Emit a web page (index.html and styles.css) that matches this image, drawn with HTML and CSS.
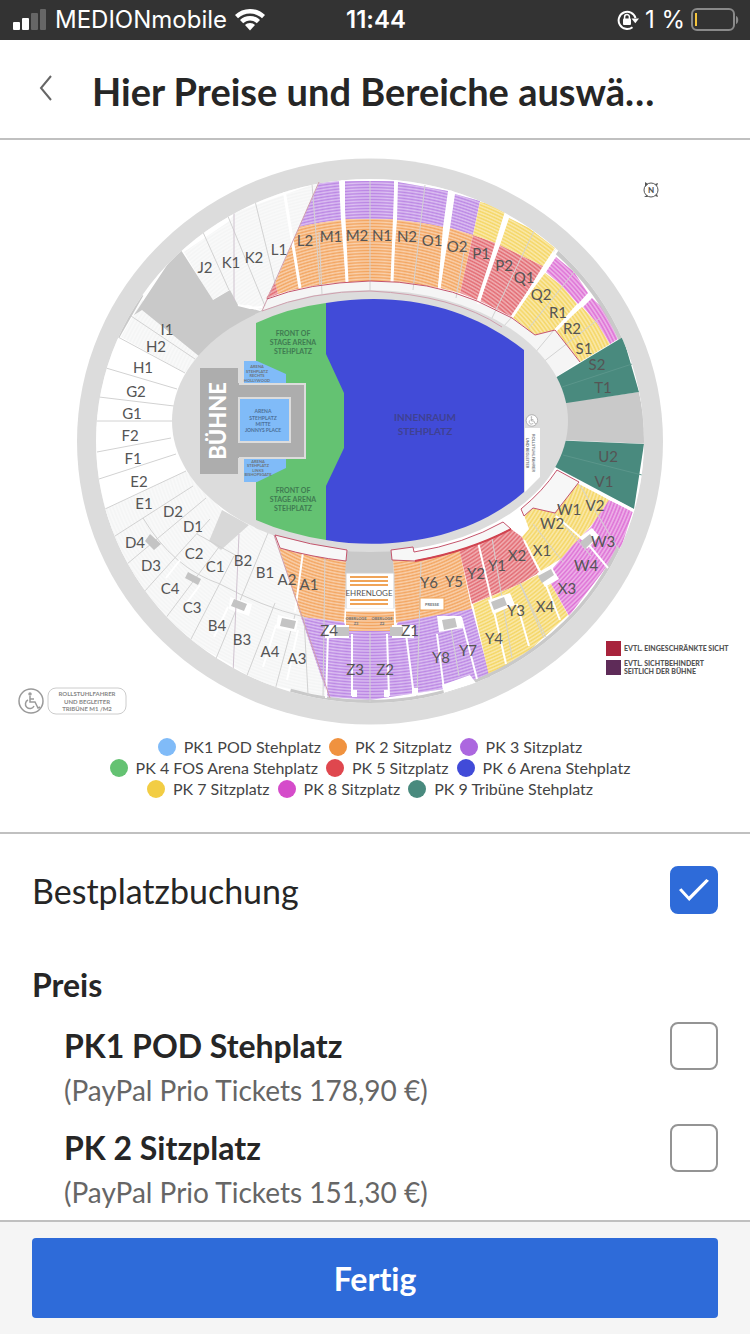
FILE: index.html
```html
<!DOCTYPE html>
<html lang="de">
<head>
    <meta charset="UTF-8">
    <meta name="viewport" content="width=device-width, initial-scale=1.0">
    <title>Preise und Bereiche</title>
    <link rel="stylesheet" href="styles.css">
</head>
<body>

    <!-- Statusleiste -->
    <div class="status-bar">
        <div class="status-left">
            <svg width="34" height="22" viewBox="0 0 34 22" aria-hidden="true">
                <rect x="0" y="13" width="7" height="8" rx="1" fill="#fff"/>
                <rect x="9" y="9" width="7" height="12" rx="1" fill="#fff"/>
                <rect x="18" y="4" width="7" height="17" rx="1" fill="#666"/>
                <rect x="27" y="0" width="6" height="21" rx="1" fill="#666"/>
            </svg>
            <span>MEDIONmobile</span>
            <svg width="30" height="22" viewBox="0 0 30 22" aria-hidden="true">
                <path d="M15 0C9 0 4 2.200 0 6l3 3.300c3.300-3 7.400-4.800 12-4.800s8.700 1.800 12 4.800L30 6C26 2.200 21 0 15 0z" fill="#fff"/>
                <path d="M15 7c-4 0-7.400 1.500-10 4l3.200 3.300c1.800-1.700 4.200-2.800 6.800-2.800s5 1.100 6.800 2.800L25 11c-2.600-2.500-6-4-10-4z" fill="#fff"/>
                <path d="M15 14c-2 0-3.800.8-5 2l5 5.500 5-5.500c-1.200-1.200-3-2-5-2z" fill="#fff"/>
            </svg>
        </div>
        <span class="status-time">11:44</span>
        <div class="status-right">
            <svg width="22" height="22" viewBox="0 0 22 22" aria-hidden="true">
                <path d="M15.500 18.200A8.600 8.600 0 1 1 18.500 9" fill="none" stroke="#fff" stroke-width="2"/>
                <path d="M14.500 9.500h7.500l-3.700 4.800z" fill="#fff"/>
                <rect x="6" y="9.500" width="8" height="6.500" rx="1" fill="#fff"/>
                <path d="M7.600 10V8a2.400 2.400 0 0 1 4.800 0v2" fill="none" stroke="#fff" stroke-width="1.500"/>
            </svg>
            <span>1 %</span>
            <svg width="48" height="24" viewBox="0 0 48 24" aria-hidden="true">
                <rect x="1" y="1" width="42" height="21" rx="5" fill="none" stroke="#8a8a8a" stroke-width="2"/>
                <rect x="4" y="5" width="2" height="13" fill="#f5c53c"/>
                <path d="M45 8c3 1 3 7 0 8z" fill="#8a8a8a"/>
            </svg>
        </div>
    </div>

    <!-- Kopfzeile -->
    <header class="page-header">
        <button class="back-button" type="button" aria-label="Zurück">
            <svg width="14" height="26" viewBox="0 0 14 26" aria-hidden="true">
                <path d="M12 1L2 13l10 12" fill="none" stroke="#666" stroke-width="2"/>
            </svg>
        </button>
        <h1>Hier Preise und Bereiche auswä…</h1>
    </header>

    <main>
        <!-- Saalplan -->
        <section class="plan">
            <svg class="plan-map" viewBox="0 140 750 588" role="img" aria-label="Saalplan">
                <defs>
                    <clipPath id="bowl"><ellipse cx="370" cy="441" rx="274" ry="262"/></clipPath>
                    <radialGradient id="rows" gradientUnits="userSpaceOnUse" cx="0" cy="0" r="3" spreadMethod="repeat" gradientTransform="translate(370 432) scale(1.120 1)">
                        <stop offset="0" stop-color="#fff" stop-opacity=".62"/>
                        <stop offset=".5" stop-color="#fff" stop-opacity=".26"/>
                        <stop offset="1" stop-color="#fff" stop-opacity=".62"/>
                    </radialGradient>
                </defs>

                <ellipse cx="370" cy="441.500" rx="293" ry="283" fill="#dcdcdc"/>
                <g clip-path="url(#bowl)">
                    <rect x="90" y="170" width="560" height="540" fill="#fff"/>

                    <!-- Gesperrte Blöcke -->
                    <g fill="#f0f1f1">
                        <path d="M184 252l44-30 8-10 84-30-57 129-14-6-12 1-8-16-17 10z"/>
                        <path d="M142 300l65 47-22 26-64-36z"/>
                        <path d="M105 509l81-38 36 39-13 31 12 9 28-25 26 10 56 163-70-15-100-60-52-80z"/>
                    </g>

                    <!-- Oberrang Nord -->
                    <g fill="#a45ddb">
                        <path d="M319 183l20-2 2 39q-22 2-42 7z"/>
                        <path d="M345 181h49v38h-49z"/>
                        <path d="M398 182l50 9-5 36q-22-5-46-7z"/>
                        <path d="M455 194l25 7-7 34-23-7z"/>
                    </g>
                    <g fill="#ef8629">
                        <path d="M299 227q20-5 42-7l5 62q-34 2-68 12l-3-11z"/>
                        <path d="M345 219h49l-3 63h-45z"/>
                        <path d="M397 220q24 2 46 7l-5 61q-24-5-46-6z"/>
                        <path d="M450 228l23 7-13 58-20-5z"/>
                    </g>
                    <g fill="#d93640">
                        <path d="M275 282l3 12-12 5z"/>
                        <path d="M473 235l23 8-19 57-17-7z"/>
                        <path d="M500 245l43 21-31 51-32-16z"/>
                    </g>
                    <g fill="#f1c72c">
                        <path d="M480 202l10 2 15 9-9 30-23-8z"/>
                        <path d="M509 218l20 10 26 20-12 18-43-21z"/>
                        <path d="M545 273l17 13 15 18-23 26-19 5-23-18z"/>
                        <path d="M582 307l15 16 13 21-30 18-25-32z"/>
                    </g>
                    <g fill="#d23fc7">
                        <path d="M556 257l18 15 14 21-10 11-16-18-16-14z"/>
                        <path d="M592 298l13 12 13 29-8 5-13-21-14-16z"/>
                    </g>

                    <!-- Ränge Süd -->
                    <g fill="#ef8629">
                        <path d="M279 548l68 13-3 61-43-5z"/>
                        <path d="M393 560h22l44-12 13 62-76 13z"/>
                        <path d="M346 610h48v21h-48z"/>
                    </g>
                    <g fill="#a45ddb">
                        <path d="M301 617l43 5 3 9h47l4-9 74-13 18 68-46 12-74 11-42-3z"/>
                    </g>
                    <g fill="#d93640">
                        <path d="M459 549l52-20 11 8 18 35-20 12-48 20z"/>
                    </g>
                    <g fill="#f1c72c">
                        <path d="M522 537l7-8-5-14 9-7 22 5 24-31 30 18-13 20-34 38-21 13z"/>
                        <path d="M473 604l47-20 21-11 9 9 18 33-38 35-41 26z"/>
                    </g>
                    <path d="M609 500l24 11-11 34-21 29-32 42-19-34 3-14 19-22 18-18z" fill="#d23fc7"/>

                    <rect x="90" y="170" width="560" height="540" fill="url(#rows)"/>

                    <!-- Freie Zonen -->
                    <path d="M179 247l34 53 17-10 8 15 22 6 20-8-20 50-55 8-63-51-8 5z" fill="#c9c9c9"/>
                    <path d="M560 403l79-11 10 52-89-4z" fill="#c9c9c9"/>
                    <path d="M347 548h45l2 26h-49z" fill="#c9c9c9"/>
                    <path d="M222 510l-13 31 12 9 28-25z" fill="#d8d8d8"/>
                    <path d="M238 305l12 3 12-1" fill="none" stroke="#fff" stroke-width="2"/>
                    <path d="M142 295l-24 42" stroke="#c9c9c9" stroke-width="3"/>
                    <path d="M556 249A274 262 0 0 1 622 338" fill="none" stroke="#c9c9c9" stroke-width="8"/>
                    <path d="M290 692A274 262 0 0 0 620 548" fill="none" stroke="#c9c9c9" stroke-width="7"/>

                    <path d="M540 387l83-50 16 55-79 12z" fill="#498a7e"/>
                    <path d="M550 440l94 4-10 65-94-50z" fill="#498a7e"/>
                    <path d="M562 387l70-23M563 455l79 20" stroke="#5b968b" stroke-width="1"/>

                    <!-- Innere Reihe -->
                    <path d="M262 311l5-12q40-16 103-18 60 0 107 20l35 17 23 17 20-5 25 31-24 16-40 30H350z" fill="#f5f5f5"/>

                    <!-- Blockgrenzen -->
                    <g fill="none" stroke="#d2d2d2" stroke-width="1">
                        <path d="M202 230l27 60M227 214l38 92M255 201l20 82M312 184l8 101M319 232l3 62M370 181v110M425 185l-12 105M466 240l-10 58M534 231l-42 87M574 272l-45 56M600 318l-62 48M512 317l-9 10M554 330l-25 30"/>
                        <path d="M118 337l67 36M131 316l64 43M106 368l71 21M99 397l75 9M97 421h75M97 452l74-14M99 479l77-25M105 509l81-38M115 536l78-50M127 564l79-66M144 592l66-73M165 619l54-72M190 641l44-85M215 661l53-128M246 678l29-75M275 690l20-75"/>
                        <path d="M143 518q30 50 77 66 40 22 84 33M197 534l40 22"/>
                        <path d="M304 617l4 78M325 552l-2 146M370 632v70M421 562l-4 134M449 616l10 60M492 538l20 120M520 584l24 54M533 524l30 38M553 512l38 44M578 482l42 70M520 583l26 54"/>
                    </g>
                    <g fill="none" stroke="#fff" stroke-width="3">
                        <path d="M284 190l16 98M342 178l5 104M396 178l-4 104M452 188l-13 102M507 210l-29 94M559 247l-47 70M591 295l-36 36"/>
                        <path d="M578 482l58 30"/>
                    </g>
                    <g fill="none" stroke="#fff" stroke-width="2">
                        <path d="M303 552l-8 60M328 634l-2 64M352 634v62M387 634l2 62M406 634l8 62M437 634l7 56M461 617l16 62M478 542l14 60 14 62M517 604l12 42M524 540l20 40 16 40M556 516l32 28 20 24M180 560l-14 18M200 585l-15 20M228 607l-14 30M276 625l-13 42M298 630l-11 50"/>
                    </g>
                    <g fill="#fff">
                        <path d="M325 625h24v13h-24zM392 625h22v13h-22zM437 616h24l2 12-24 4zM488 600l22-7 5 12-22 9zM537 573l14-7 8 13-14 8zM580 537l12-9 7 8-12 13zM230 597l22 7-3 12-20-7zM278 615l20 5-2 12-20-4z"/>
                        <path d="M442 685l28-10 6 8-32 10zM352 690h5v7h-5zM384 690h5v7h-5zM412 688h6v7h-6z"/>
                    </g>
                    <path d="M234 209l0 92M239 534l-6 140" stroke="#cfc2cf" stroke-width="1"/>
                </g>

                <g fill="#c4c4c4">
                    <path d="M150 534l11 10-7 6-9-9zM188 572l13 7-3 6-13-7zM234 599l13 5-3 7-13-5zM282 618l14 3-2 8-14-3zM336 627h13v9h-13zM390 627h13v9h-13zM442 620l13-2 2 9-13 3zM491 602l13-5 3 8-13 5zM538 576l13-7 3 6-12 8zM580 542l10-8 4 6-9 9z"/>
                </g>

                <!-- Innenraum -->
                <ellipse cx="370" cy="421" rx="198" ry="131" fill="#dcdcdc"/>
                <path d="M256 323q32-15 70-20h40v237h-40q-38-6-70-20z" fill="#64c272"/>
                <path d="M326 303c74-12 142 3 198 47v142c-50 44-128 60-198 48v-54l18-38v-55l-18-39z" fill="#414bd8"/>
                <path d="M244 361h13l29 13v9h-42zM244 459h42v9l-29 14h-13z" fill="#80bbf8"/>
                <path d="M200 368h38v15h67v75h-67v16h-38z" fill="#adadad"/>
                <path d="M239 384h66v74h-66" fill="none" stroke="#dcdcdc" stroke-width="2"/>
                <rect x="239" y="398" width="51" height="44" fill="#80bbf8" stroke="#dcdcdc" stroke-width="2"/>
                <path d="M525 428h15v49l-15 15z" fill="#fff"/>

                <!-- Sichteinschränkungen -->
                <g fill="none" stroke="#c4546c" stroke-width="1">
                    <path d="M319 182l-57 129q50-20 108-20 84 4 132 36" stroke="#cfa0ae"/>
                    <path d="M267 299q40-16 103-18 60 0 107 20l35 17 23 17 20-5 25 32"/>
                    <path d="M274 535l56 163" stroke="#cfa0ae"/>
                    <path d="M275 535q35 10 72 15l-1 11q-35-4-66-13z" fill="#f7f7f7"/>
                    <path d="M391 550l22-3 1 5q50-8 89-30l8 7q-40 22-96 32l-23-1z" fill="#f7f7f7"/>
                    <path d="M521 509q22-18 36-39l22 12-24 31-22-5-9 8z" fill="#f7f7f7"/>
                </g>
                <path d="M415 561q54-10 96-32" fill="none" stroke="#d0434f" stroke-width="2"/>

                <!-- Ehrenloge -->
                <rect x="346" y="573" width="48" height="36" fill="#fff" stroke="#d0d0d0" stroke-width="1"/>
                <path d="M350 577h38M350 581h38M350 585h38M350 600h38M350 604h38" stroke="#f0a458" stroke-width="2"/>
                <path d="M345 610h50" stroke="#fff" stroke-width="3"/>
                <rect x="420" y="598" width="24" height="12" fill="#fff" stroke="#f0a458" stroke-width="1"/>

                <!-- Blocknamen -->
                <g class="block-names">
                    <text x="205" y="273">J2</text><text x="231" y="268">K1</text><text x="254" y="263">K2</text><text x="279" y="255">L1</text>
                    <text x="305" y="246">L2</text><text x="331" y="242">M1</text><text x="357" y="241">M2</text><text x="382" y="241">N1</text>
                    <text x="407" y="242">N2</text><text x="432" y="246">O1</text><text x="457" y="252">O2</text><text x="481" y="259">P1</text>
                    <text x="504" y="271">P2</text><text x="524" y="283">Q1</text><text x="541" y="300">Q2</text><text x="558" y="318">R1</text>
                    <text x="572" y="334">R2</text><text x="584" y="354">S1</text><text x="597" y="370">S2</text><text x="603" y="393">T1</text>
                    <text x="608" y="462">U2</text><text x="604" y="487">V1</text><text x="595" y="511">V2</text><text x="569" y="515">W1</text>
                    <text x="552" y="529">W2</text><text x="542" y="556">X1</text><text x="517" y="561">X2</text><text x="497" y="571">Y1</text>
                    <text x="476" y="579">Y2</text><text x="454" y="587">Y5</text><text x="429" y="588">Y6</text><text x="603" y="547">W3</text>
                    <text x="586" y="571">W4</text><text x="567" y="594">X3</text><text x="545" y="612">X4</text><text x="516" y="616">Y3</text>
                    <text x="494" y="644">Y4</text><text x="468" y="656">Y7</text><text x="441" y="663">Y8</text><text x="410" y="636">Z1</text>
                    <text x="385" y="675">Z2</text><text x="355" y="675">Z3</text><text x="329" y="636">Z4</text><text x="309" y="590">A1</text>
                    <text x="287" y="585">A2</text><text x="297" y="664">A3</text><text x="270" y="657">A4</text><text x="265" y="578">B1</text>
                    <text x="243" y="566">B2</text><text x="242" y="645">B3</text><text x="217" y="631">B4</text><text x="215" y="572">C1</text>
                    <text x="194" y="559">C2</text><text x="192" y="613">C3</text><text x="170" y="594">C4</text><text x="193" y="532">D1</text>
                    <text x="173" y="517">D2</text><text x="151" y="571">D3</text><text x="135" y="548">D4</text><text x="144" y="509">E1</text>
                    <text x="139" y="487">E2</text><text x="133" y="464">F1</text><text x="130" y="441">F2</text><text x="132" y="419">G1</text>
                    <text x="136" y="397">G2</text><text x="143" y="373">H1</text><text x="156" y="352">H2</text><text x="167" y="335">I1</text>
                </g>
                <text class="stage-name" transform="translate(226 421) rotate(-90)">BÜHNE</text>
                <g class="floor-name">
                    <text x="425" y="421">INNENRAUM</text>
                    <text x="425" y="435">STEHPLATZ</text>
                </g>
                <g class="front-name">
                    <text x="293" y="336">FRONT OF</text><text x="293" y="345">STAGE ARENA</text><text x="293" y="354">STEHPLATZ</text>
                    <text x="293" y="493">FRONT OF</text><text x="293" y="502">STAGE ARENA</text><text x="293" y="511">STEHPLATZ</text>
                </g>
                <g class="pod-name">
                    <text x="263" y="413">ARENA</text><text x="263" y="420">STEHPLATZ</text><text x="263" y="426">MITTE</text><text x="263" y="432">JONNYS PLACE</text>
                </g>
                <g class="pod-name small">
                    <text x="257" y="368">ARENA</text><text x="257" y="373">STEHPLATZ</text><text x="257" y="377">RECHTS</text><text x="257" y="382">HOLLYWOOD</text>
                    <text x="258" y="463">ARENA</text><text x="258" y="467">STEHPLATZ</text><text x="258" y="472">LINKS</text><text x="258" y="476">BISHOPSGATE</text>
                    <text x="432" y="606">PRESSE</text>
                    <text x="356" y="620">OBERLOGE</text><text x="356" y="625">Z3</text><text x="382" y="620">OBERLOGE</text><text x="382" y="625">Z2</text>
                    <text transform="translate(532 453) rotate(90)">ROLLSTUHLFAHRER</text>
                    <text transform="translate(526 453) rotate(90)">UND BEGLEITER</text>
                </g>
                <text class="lodge-name" x="369" y="596">EHRENLOGE</text>

                <!-- Rollstuhlplätze -->
                <g id="wheelchair" fill="none" stroke="#9a9a9a" stroke-width="1.500">
                    <circle cx="31" cy="701" r="12" fill="#fff"/>
                    <circle cx="30" cy="694" r="1"/>
                    <path d="M30 696v6h5l3 6 2-1M30 699h4M28 700a4.500 4.500 0 1 0 6 6"/>
                </g>
                <use href="#wheelchair" transform="translate(517 84) scale(.48)"/>
                <rect x="48" y="688" width="78" height="26" rx="8" fill="#fff" stroke="#ccc" stroke-width="1"/>
                <g class="note-name">
                    <text x="87" y="696">ROLLSTUHLFAHRER</text><text x="87" y="704">UND BEGLEITER</text><text x="87" y="711">TRIBÜNE M1 /M2</text>
                </g>

                <!-- Kompass -->
                <circle cx="651" cy="190" r="7" fill="none" stroke="#555" stroke-width="1"/>
                <path d="M645 182l3 2-3 3zM658 183l-3 1 2 2zM644 197l3-2 1 2zM657 194l1 3-3-1z" fill="#555"/>
                <text class="compass-name" x="651" y="193">N</text>

                <!-- Hinweise -->
                <rect x="606" y="641" width="15" height="15" fill="#a8233c"/>
                <rect x="606" y="660" width="15" height="15" fill="#5e2b58"/>
                <g class="hint-name">
                    <text x="624" y="651">EVTL. EINGESCHRÄNKTE SICHT</text>
                    <text x="624" y="666">EVTL. SICHTBEHINDERT</text>
                    <text x="624" y="674">SEITLICH DER BÜHNE</text>
                </g>
            </svg>

            <!-- Legende -->
            <div class="legend">
                <ul>
                    <li><span class="dot pk1"></span>PK1 POD Stehplatz</li>
                    <li><span class="dot pk2"></span>PK 2 Sitzplatz</li>
                    <li><span class="dot pk3"></span>PK 3 Sitzplatz</li>
                </ul>
                <ul>
                    <li><span class="dot pk4"></span>PK 4 FOS Arena Stehplatz</li>
                    <li><span class="dot pk5"></span>PK 5 Sitzplatz</li>
                    <li><span class="dot pk6"></span>PK 6 Arena Stehplatz</li>
                </ul>
                <ul>
                    <li><span class="dot pk7"></span>PK 7 Sitzplatz</li>
                    <li><span class="dot pk8"></span>PK 8 Sitzplatz</li>
                    <li><span class="dot pk9"></span>PK 9 Tribüne Stehplatz</li>
                </ul>
            </div>
        </section>

        <!-- Auswahl -->
        <form class="options" id="options">
            <div class="option best-seat">
                <label for="best">Bestplatzbuchung</label>
                <input type="checkbox" id="best" checked>
            </div>

            <h2>Preis</h2>
            <div class="option price">
                <label for="pk1">
                    <strong>PK1 POD Stehplatz</strong>
                    <span>(PayPal Prio Tickets 178,90 €)</span>
                </label>
                <input type="checkbox" id="pk1">
            </div>
            <div class="option price">
                <label for="pk2">
                    <strong>PK 2 Sitzplatz</strong>
                    <span>(PayPal Prio Tickets 151,30 €)</span>
                </label>
                <input type="checkbox" id="pk2">
            </div>
        </form>
    </main>

    <footer class="page-footer">
        <button class="done-button" type="submit" form="options">Fertig</button>
    </footer>

</body>
</html>
```
FILE: styles.css
```css
* {
    box-sizing: border-box;
}

body {
    margin: 0;
    min-height: 100vh;
    display: flex;
    flex-direction: column;
    background-color: #fff;
    color: #262626;
    font-family: Lato, "Open Sans", sans-serif;
    font-variant-ligatures: none;
}

main {
    flex: 1;
}

/* Statusleiste */
.status-bar {
    display: grid;
    grid-template-columns: 1fr auto 1fr;
    align-items: center;
    height: 40px;
    padding: 0 11px 0 13px;
    background-color: #333;
    color: #fff;
    font-family: Inter, "Liberation Sans", sans-serif;
    font-size: 24px;
    line-height: 40px;
}

.status-left,
.status-right {
    display: flex;
    align-items: center;
    gap: 8px;
}

.status-right {
    justify-content: flex-end;
    gap: 6px;
}

.status-time {
    font-weight: 600;
}

/* Kopfzeile */
.page-header {
    display: flex;
    align-items: center;
    gap: 24px;
    height: 100px;
    padding: 0 32px 0 24px;
    border-bottom: 2px solid #c0c0c0;
}

    .page-header h1 {
        margin: 0;
        font-size: 38px;
        line-height: 48px;
        padding-top: 4px;
        white-space: nowrap;
    }

.back-button {
    width: 44px;
    height: 44px;
    padding: 0;
    border: none;
    background: none;
    cursor: pointer;
}

/* Saalplan */
.plan {
    padding-bottom: 33px;
    border-bottom: 2px solid #c0c0c0;
}

.plan-map {
    display: block;
    width: 100%;
    height: auto;
}

    .plan-map text {
        fill: #555;
        text-anchor: middle;
        font-weight: 400;
    }

    .plan-map .block-names text {
        font-size: 15px;
    }

    .plan-map .stage-name {
        fill: #fff;
        font-size: 22px;
        font-weight: 900;
    }

    .plan-map .floor-name text {
        fill: #3f4191;
        font-size: 10px;
        font-weight: 700;
    }

    .plan-map .front-name text {
        fill: #3f7a51;
        font-size: 7px;
        font-weight: 700;
    }

    .plan-map .pod-name text {
        fill: #4c6f96;
        font-size: 5px;
        font-weight: 700;
    }

    .plan-map .small text {
        fill: #6d7378;
        font-size: 4px;
    }

    .plan-map .lodge-name {
        font-size: 8px;
    }

    .plan-map .note-name text {
        fill: #888;
        font-size: 6px;
        font-weight: 700;
    }

    .plan-map .compass-name {
        font-size: 8px;
        font-weight: 900;
    }

    .plan-map .hint-name text {
        font-size: 7px;
        font-weight: 900;
        text-anchor: start;
    }

/* Legende */
.legend {
    padding: 8px 10px 0 0;
    font-size: 16px;
    color: #444;
}

    .legend ul {
        display: flex;
        justify-content: center;
        gap: 8px;
        margin: 0;
        padding: 0;
        list-style: none;
        line-height: 21px;
    }

    .legend li {
        display: flex;
        align-items: center;
        gap: 8px;
    }

.dot {
    width: 18px;
    height: 18px;
    border-radius: 50%;
}

.pk1 { background-color: #80bbf8; }
.pk2 { background-color: #f0923f; }
.pk3 { background-color: #ac67df; }
.pk4 { background-color: #64c272; }
.pk5 { background-color: #df474e; }
.pk6 { background-color: #414bd8; }
.pk7 { background-color: #f2cd44; }
.pk8 { background-color: #d54cca; }
.pk9 { background-color: #498a7e; }

/* Auswahl */
.options {
    padding: 32px 32px 0;
}

    .options h2 {
        margin: 0;
        padding: 47px 0 15px;
        font-size: 32px;
        line-height: 44px;
    }

.option {
    display: flex;
    justify-content: space-between;
    align-items: flex-start;
}

    .option label {
        flex: 1;
        cursor: pointer;
    }

    .option input {
        appearance: none;
        width: 48px;
        height: 48px;
        margin: 0;
        border: 2px solid #949494;
        border-radius: 8px;
        background-color: #fff;
        cursor: pointer;
    }

        .option input:checked {
            display: grid;
            place-items: center;
            border-color: #2e6bd9;
            background-color: #2e6bd9;
        }

        .option input:checked::before {
            content: "";
            width: 30px;
            height: 22px;
            background-color: #fff;
            clip-path: polygon(0 50%, 8% 42%, 33% 80%, 91% 0, 100% 8%, 34% 100%);
        }

.best-seat label {
    font-size: 34px;
    line-height: 50px;
}

.price {
    padding-left: 32px;
}

    .price + .price {
        margin-top: 14px;
    }

    .price strong {
        display: block;
        font-size: 32px;
        line-height: 48px;
    }

    .price span {
        display: block;
        color: #666;
        font-size: 28px;
        line-height: 40px;
    }

/* Fußzeile */
.page-footer {
    position: sticky;
    bottom: 0;
    padding: 16px 32px;
    border-top: 2px solid #c0c0c0;
    background-color: #f5f5f5;
}

.done-button {
    width: 100%;
    height: 80px;
    border: none;
    border-radius: 4px;
    background-color: #2e6bd9;
    color: #fff;
    font-family: Lato, "Open Sans", sans-serif;
    font-size: 32px;
    font-weight: 700;
    font-variant-ligatures: none;
    cursor: pointer;
}
```
